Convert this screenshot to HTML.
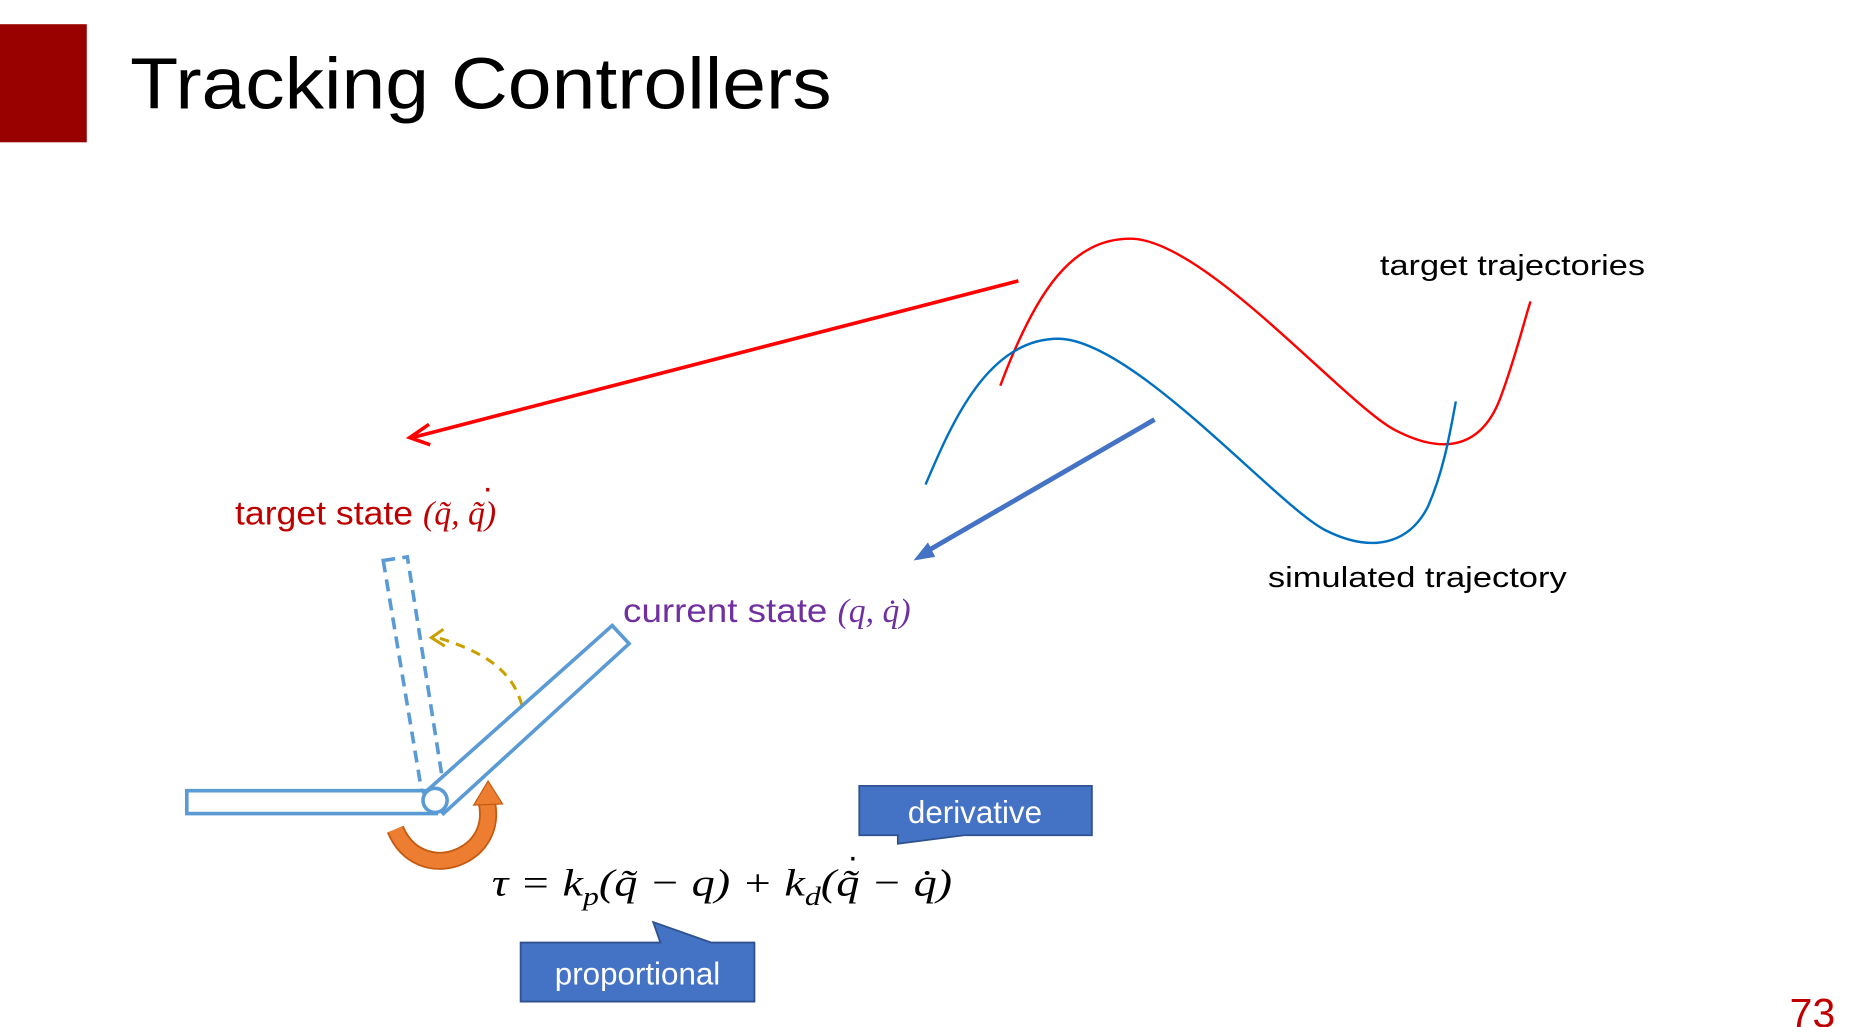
<!DOCTYPE html>
<html><head><meta charset="utf-8"><style>
html,body{margin:0;padding:0;background:#fff;width:1868px;height:1027px;overflow:hidden}
svg{display:block}
text{font-family:"Liberation Sans",sans-serif}
.m{font-family:"Liberation Serif","DejaVu Serif",serif;font-style:italic}
</style></head><body>
<svg width="1868" height="1027" viewBox="0 0 1550 852" xmlns="http://www.w3.org/2000/svg">
<rect x="0" y="20" width="72" height="98" fill="#990000"/>
<text x="108" y="90" font-size="60" fill="#000" textLength="582" lengthAdjust="spacingAndGlyphs">Tracking Controllers</text>

<line x1="845" y1="233" x2="342" y2="363" stroke="#f00" stroke-width="3"/>
<path d="M356 352 L340 363 L357 369" fill="none" stroke="#f00" stroke-width="3"/>
<path d="M830 320 C860 240 890 198 938 198 C1000 198 1120 340 1160 358 C1200 378 1230 370 1245 330 C1258 295 1265 265 1270 250" fill="none" stroke="#f00" stroke-width="2"/>
<path d="M768 402 C790 350 820 281 878 281 C940 281 1060 420 1100 440 C1140 460 1170 450 1185 420 C1198 390 1203 360 1208 333" fill="none" stroke="#0070C0" stroke-width="2"/>
<line x1="958" y1="348" x2="768" y2="458" stroke="#4472C4" stroke-width="4"/>
<polygon points="758,465 770,450 776,462" fill="#4472C4"/>

<text x="1145" y="228" font-size="24" fill="#000" textLength="220" lengthAdjust="spacingAndGlyphs">target trajectories</text>
<text x="1052" y="487" font-size="24" fill="#000" textLength="248" lengthAdjust="spacingAndGlyphs">simulated trajectory</text>
<text x="195" y="435" font-size="28" fill="#C00000"><tspan textLength="156" lengthAdjust="spacingAndGlyphs">target state </tspan><tspan class="m">(q̃, q̃)</tspan></text>
<text x="400" y="414" font-size="28" fill="#C00000">·</text>
<text x="517" y="516" font-size="28" fill="#7030A0"><tspan textLength="178" lengthAdjust="spacingAndGlyphs">current state </tspan><tspan class="m">(q, q̇)</tspan></text>

<polygon points="318,465 338,462 368,652 350,657" fill="none" stroke="#5B9BD5" stroke-width="3" stroke-dasharray="10,6"/>
<path d="M433 585 C425 555 400 540 360 528" fill="none" stroke="#C9A000" stroke-width="2.5" stroke-dasharray="8,6"/>
<path d="M368 522 L358 529 L369 536" fill="none" stroke="#C9A000" stroke-width="2.5"/>
<rect x="155" y="656" width="207" height="19" fill="#fff" stroke="#5B9BD5" stroke-width="3"/>
<polygon points="352,658 508,519 522,534 368,675" fill="#fff" stroke="#5B9BD5" stroke-width="3"/>
<circle cx="361" cy="664" r="10" fill="#fff" stroke="#5B9BD5" stroke-width="3"/>
<!-- orange arrow -->
<path d="M328 688 C338 712 360 718 378 712 C400 704 408 685 404 666" fill="none" stroke="#C55A11" stroke-width="15"/>
<path d="M328 688 C338 712 360 718 378 712 C400 704 408 685 404 666" fill="none" stroke="#ED7D31" stroke-width="12"/>
<polygon points="393,668 405,648 417,667" fill="#ED7D31" stroke="#C55A11" stroke-width="1"/>

<path d="M713 652 H906 V693 H800 L745 700 V693 H713 Z" fill="#4472C4" stroke="#2F528F" stroke-width="1.5"/>
<text x="809" y="683" font-size="26" fill="#fff" text-anchor="middle">derivative</text>
<text class="m" x="408" y="743" font-size="32" fill="#000" textLength="382" lengthAdjust="spacingAndGlyphs">τ = k<tspan font-size="22" dy="8">p</tspan><tspan dy="-8">(q̃ − q) + k</tspan><tspan font-size="22" dy="8">d</tspan><tspan dy="-8">(q̃ − q̇)</tspan></text>
<text x="703" y="720" font-size="28" fill="#000">·</text>
<path d="M432 782 H548 L542 765 L590 782 H626 V831 H432 Z" fill="#4472C4" stroke="#2F528F" stroke-width="1.5"/>
<text x="529" y="817" font-size="26" fill="#fff" text-anchor="middle">proportional</text>

<text x="1485" y="852" font-size="34" fill="#C00000">73</text>
</svg>
</body></html>
